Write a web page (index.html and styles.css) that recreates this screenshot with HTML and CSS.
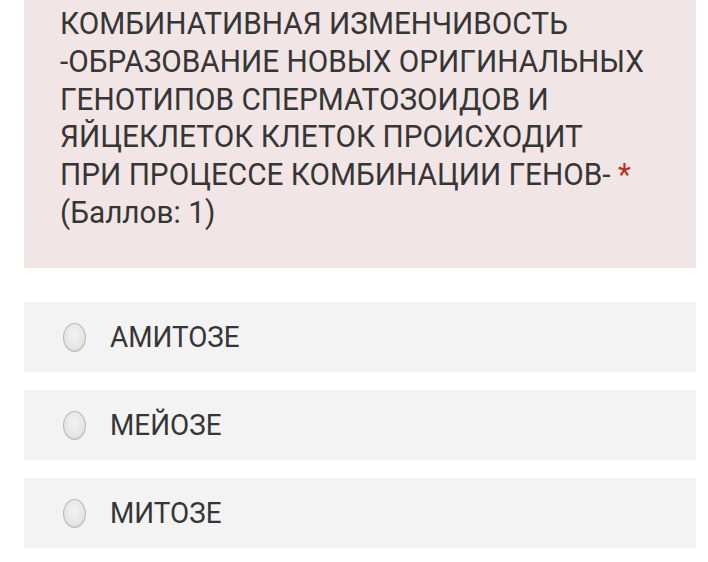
FILE: index.html
```html
<!DOCTYPE html>
<html lang="ru">
<head>
<meta charset="utf-8">
<link rel="stylesheet" href="styles.css">
</head>
<body>
<div class="page">
  <div class="question">
    <p class="q-text">КОМБИНАТИВНАЯ ИЗМЕНЧИВОСТЬ<br>-ОБРАЗОВАНИЕ НОВЫХ ОРИГИНАЛЬНЫХ<br>ГЕНОТИПОВ СПЕРМАТОЗОИДОВ И<br>ЯЙЦЕКЛЕТОК КЛЕТОК ПРОИСХОДИТ<br>ПРИ ПРОЦЕССЕ КОМБИНАЦИИ ГЕНОВ- <span class="req">*</span><br>(Баллов: 1)</p>
  </div>
  <div class="options">
    <label class="option"><span class="radio"></span><span class="opt-text">АМИТОЗЕ</span></label>
    <label class="option"><span class="radio"></span><span class="opt-text">МЕЙОЗЕ</span></label>
    <label class="option"><span class="radio"></span><span class="opt-text">МИТОЗЕ</span></label>
  </div>
</div>
</body>
</html>
```

FILE: styles.css
```css
html, body {
  margin: 0;
  padding: 0;
  background: #ffffff;
}
body {
  font-family: Roboto, "Noto Sans", sans-serif;
  color: #363636;
}
.page {
  padding: 0 12px 0 24px;
}
.question {
  background: #f2e5e5;
  height: 268px;
  padding: 5px 0 0 36px;
  box-sizing: border-box;
}
.q-text {
  margin: 0;
  font-size: 31.5px;
  line-height: 37.8px;
  transform: scaleX(0.945);
  transform-origin: left top;
  white-space: nowrap;
}
.req {
  color: #b83228;
}
.options {
  display: flex;
  flex-direction: column;
  gap: 18px;
  margin-top: 34px;
}
.option {
  display: flex;
  align-items: center;
  height: 70px;
  background: #f3f3f3;
  padding-left: 39px;
}
.radio {
  flex: none;
  width: 23px;
  height: 29px;
  border-radius: 50%;
  box-sizing: border-box;
  border: 1px solid #b9b9b9;
  background: radial-gradient(ellipse at 50% 40%, #f4f4f4 0%, #e2e2e2 70%, #d4d4d4 100%);
  box-shadow: inset 0 -1px 1px rgba(0,0,0,0.08);
}
.opt-text {
  margin-left: 24px;
  font-size: 29px;
  transform: scaleX(0.96);
  transform-origin: left center;
}
```
